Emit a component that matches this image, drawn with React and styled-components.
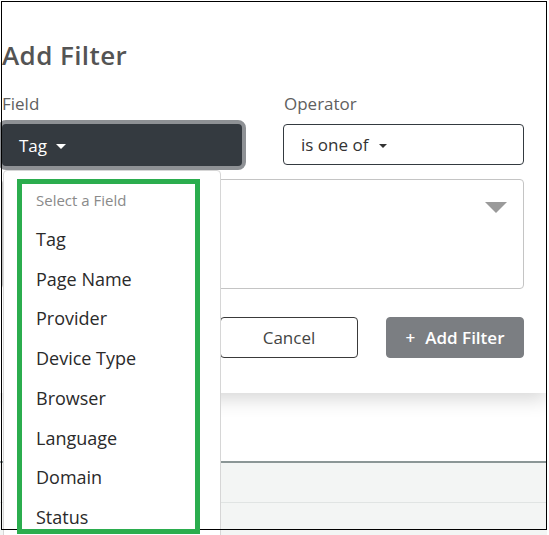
import React from 'react';
import styled, { createGlobalStyle } from 'styled-components';

const GlobalStyle = createGlobalStyle`
  html, body {
    margin: 0;
    padding: 0;
    background: #fff;
  }
  body {
    font-family: "Open Sans", "Noto Sans", "Liberation Sans", sans-serif;
    color: #333;
  }
`

const Shot = styled.div`
  position: relative;
  width: 549px;
  height: 535px;
  overflow: hidden;
  background: #fff;
`

const Viewport = styled.div`
  position: relative;
  width: 547px;
  height: 535px;
  overflow: hidden;
  display: flex;
  flex-direction: column;
`

const Modal = styled.div`
  background: #fff;
  padding: 40px 23px 35px 2px;
  box-shadow: 0 6px 18px rgba(0, 0, 0, 0.16);
  display: flex;
  flex-direction: column;
`

const Title = styled.h2`
  margin: 0;
  font-size: 26px;
  line-height: 30px;
  font-weight: 600;
  color: #545454;
  letter-spacing: 0.4px;
`

const Fields = styled.div`
  display: grid;
  grid-template-columns: 241px 241px;
  justify-content: space-between;
  margin-top: 22px;
`

const FieldGroup = styled.div`
  display: flex;
  flex-direction: column;
  gap: 7px;
`

const Label = styled.label`
  font-size: 17px;
  line-height: 24px;
  color: #606060;
  padding-left: ${p => p.$indent || 0}px;
`

const Caret = styled.span`
  display: inline-block;
  width: 0;
  height: 0;
  margin-left: ${p => p.$gap || 9}px;
  border-top: ${p => p.$size || 5}px solid currentColor;
  border-left: ${p => p.$size || 5}px solid transparent;
  border-right: ${p => p.$size || 5}px solid transparent;
  vertical-align: middle;
`

const DarkToggle = styled.button`
  height: 42px;
  margin-top: 1px;
  width: 240px;
  text-align: left;
  padding: 0 17px;
  border: none;
  border-radius: 4px;
  background: #343a40;
  color: #fff;
  font-family: inherit;
  font-size: 17px;
  font-weight: 500;
  box-shadow: 0 0 0 4px #8e9195;
`

const SelectToggle = styled.button`
  height: 41px;
  margin-top: 1px;
  text-align: left;
  padding: 0 17px;
  border: 1px solid #343a40;
  border-radius: 4px;
  background: #fff;
  color: #333;
  font-family: inherit;
  font-size: 17px;
`

const ValueBox = styled.div`
  position: relative;
  margin-top: 13px;
  height: 110px;
  border: 1px solid #c4c4c4;
  border-radius: 4px;
  display: flex;
  justify-content: flex-end;
  align-items: flex-start;
  padding: 22px 16px 0 0;
  box-sizing: border-box;
`

const ValueArrow = styled.span`
  width: 0;
  height: 0;
  border-top: 11px solid #9a9a9a;
  border-left: 11px solid transparent;
  border-right: 11px solid transparent;
`

const Actions = styled.div`
  display: flex;
  justify-content: flex-end;
  gap: 28px;
  margin-top: 28px;
`

const Button = styled.button`
  width: 138px;
  height: 41px;
  border-radius: 4px;
  font-family: inherit;
  font-size: 17px;
  font-weight: ${p => (p.$primary ? 600 : 400)};
  border: 1px solid ${p => (p.$primary ? '#7b7e82' : '#3a3a3a')};
  background: ${p => (p.$primary ? '#7b7e82' : '#fff')};
  color: ${p => (p.$primary ? '#fff' : '#444')};
  display: flex;
  align-items: center;
  justify-content: center;
  gap: 10px;
`

const PageArea = styled.div`
  margin-top: 68px;
  flex: 1;
  border-top: 2px solid #8b9696;
  background: #f3f5f4;
`

const PageRow = styled.div`
  height: 39px;
  border-bottom: 1px solid #e0e4e3;
`

const Menu = styled.div`
  position: absolute;
  top: 170px;
  left: 3px;
  width: 218px;
  height: 380px;
  box-sizing: border-box;
  background: #fff;
  border: 1px solid #d6d6d6;
  border-radius: 4px;
  padding-top: 9px;
`

const MenuHeader = styled.div`
  padding: 0 32px;
  font-size: 15px;
  line-height: 40px;
  color: #8a8a8a;
`

const MenuItem = styled.div`
  padding: 0 32px;
  font-size: 18px;
  line-height: 39.7px;
  color: #2a2a2a;
`

const FrameLine = styled.div`
  position: absolute;
  left: 1px;
  top: 1px;
  width: 546px;
  height: 529px;
  box-sizing: border-box;
  border: 1px solid #000;
  pointer-events: none;
`

const Highlight = styled.div`
  position: absolute;
  left: 17px;
  top: 179px;
  width: 183px;
  height: 355px;
  box-sizing: border-box;
  border: 5px solid #2bad4e;
  pointer-events: none;
`

const fields = ['Tag', 'Page Name', 'Provider', 'Device Type', 'Browser', 'Language', 'Domain', 'Status'];

const App = () => {
  return (
    <>
      <GlobalStyle />
      <Shot>
        <Viewport>
          <Modal>
            <Title>Add Filter</Title>
            <Fields>
              <FieldGroup>
                <Label>Field</Label>
                <DarkToggle>Tag<Caret $gap={9} $size={5} /></DarkToggle>
              </FieldGroup>
              <FieldGroup>
                <Label $indent={1}>Operator</Label>
                <SelectToggle>is one of<Caret $gap={11} $size={4} /></SelectToggle>
              </FieldGroup>
            </Fields>
            <ValueBox>
              <ValueArrow />
            </ValueBox>
            <Actions>
              <Button>Cancel</Button>
              <Button $primary><span>+</span>Add Filter</Button>
            </Actions>
          </Modal>
          <PageArea>
            <PageRow />
          </PageArea>
          <Menu>
            <MenuHeader>Select a Field</MenuHeader>
            {fields.map(f => (
              <MenuItem key={f}>{f}</MenuItem>
            ))}
          </Menu>
        </Viewport>
        <FrameLine />
        <Highlight />
      </Shot>
    </>
  )
}

export default App
